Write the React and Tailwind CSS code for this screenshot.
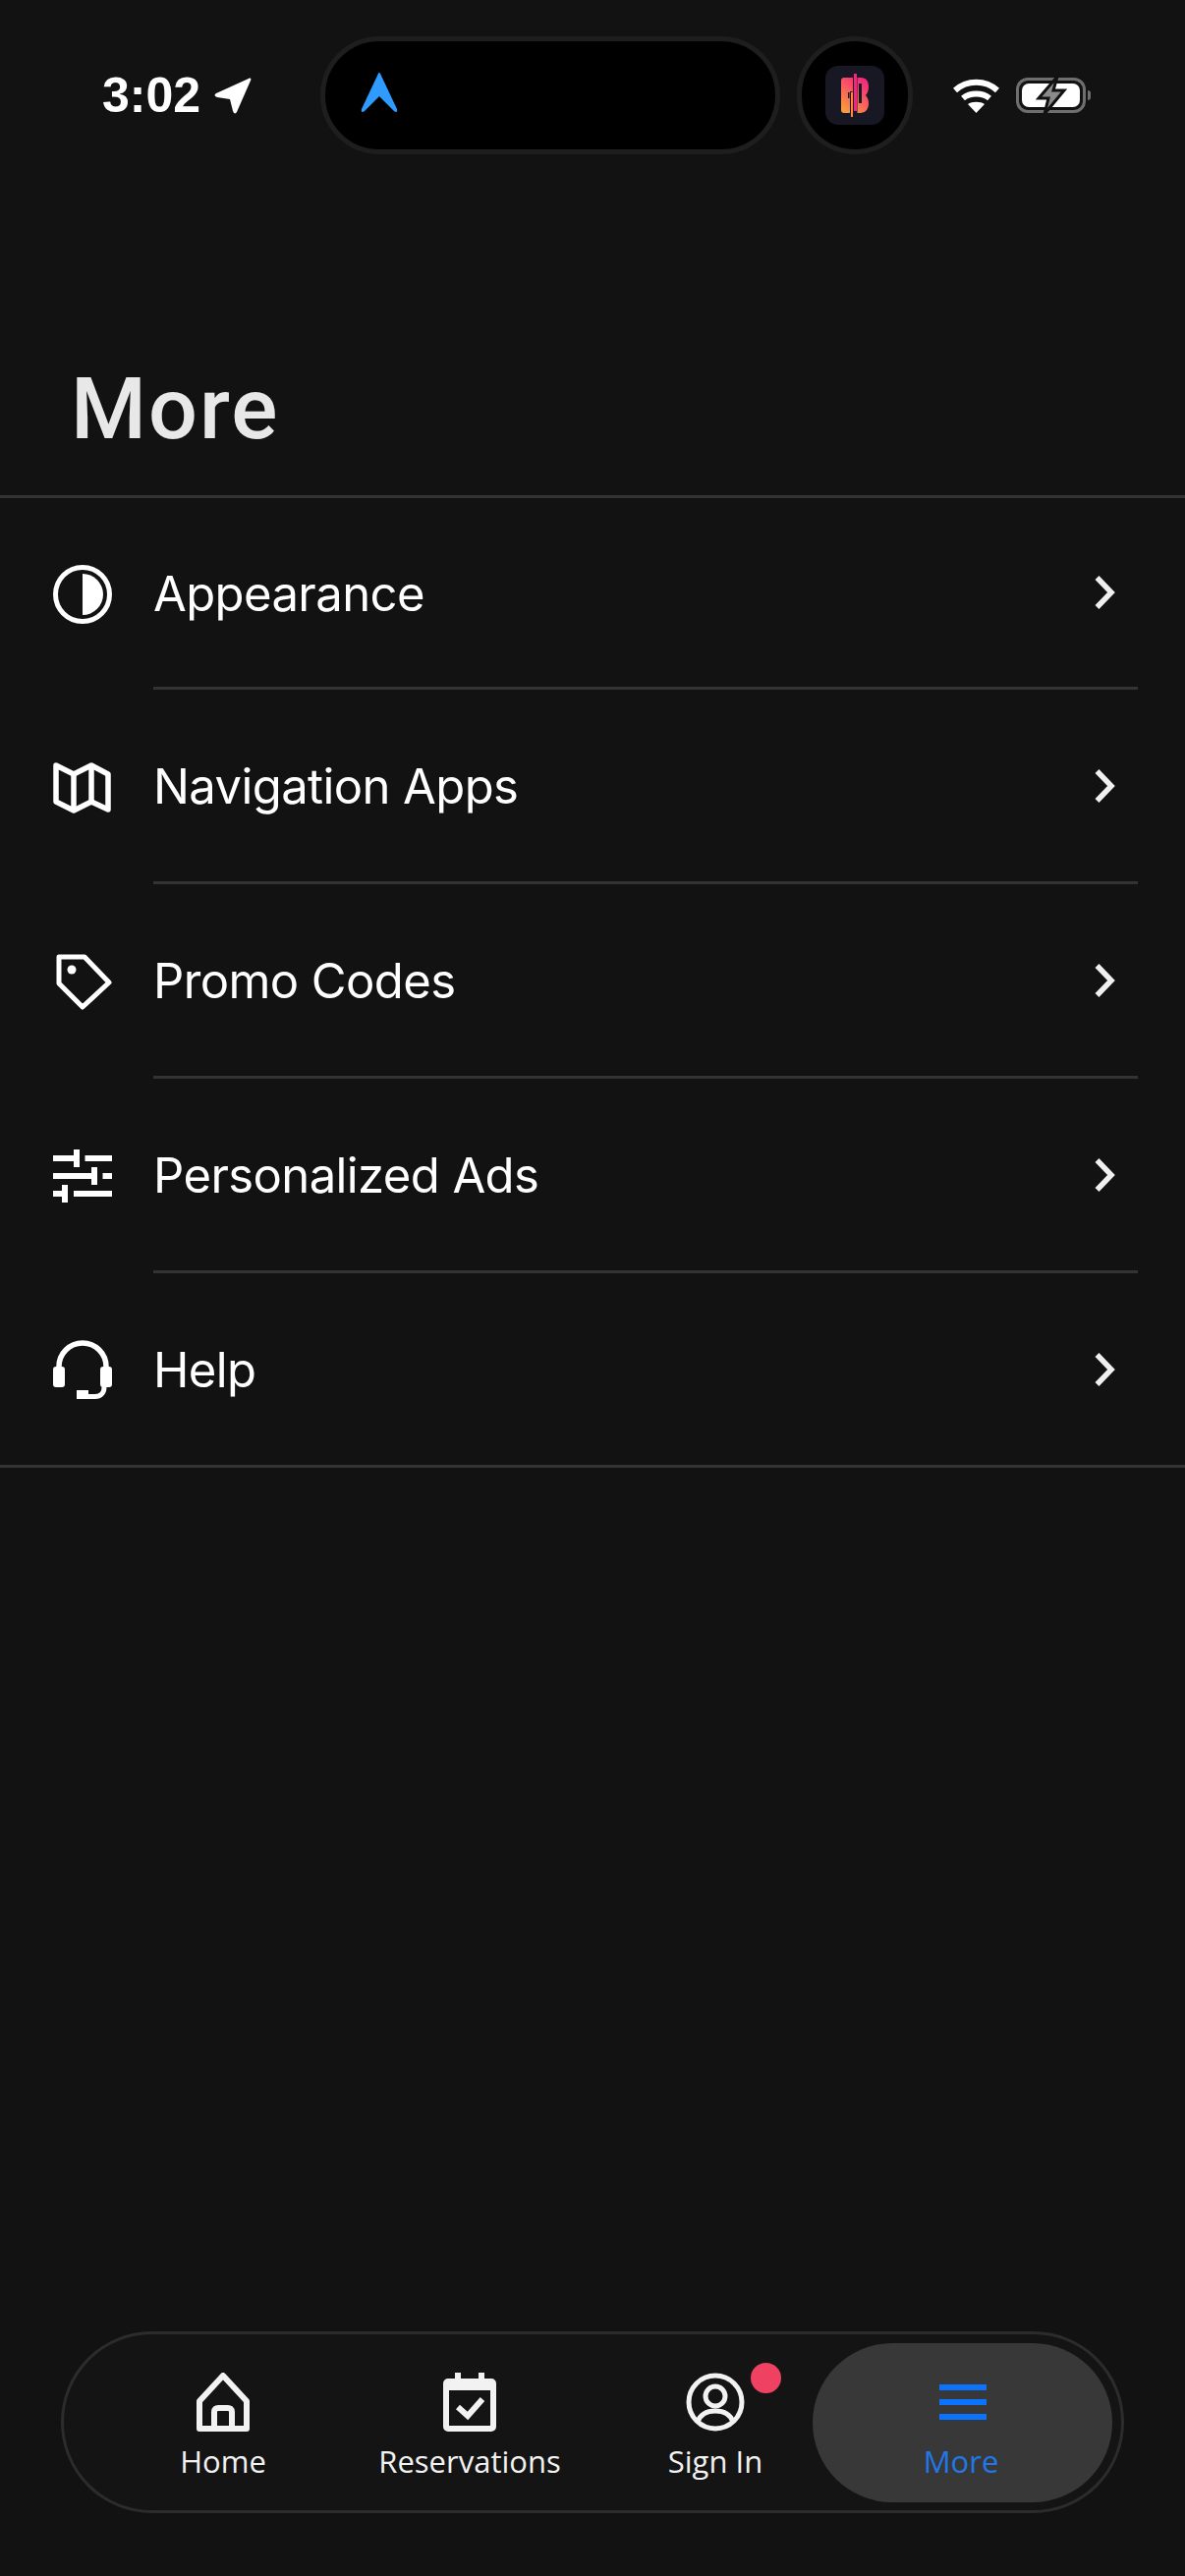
const rows = [
  {
    label: "Appearance",
    icon: (
      <svg width="60" height="60" viewBox="0 0 60 60" fill="none">
        <circle cx="30" cy="30" r="27.500" stroke="#fff" strokeWidth="5" />
        <path d="M30 9a21 21 0 0 1 0 42Z" fill="#fff" />
      </svg>
    ),
  },
  {
    label: "Navigation Apps",
    icon: (
      <svg width="59" height="53" viewBox="0 0 59 53" fill="none" stroke="#fff" strokeWidth="5.500" strokeLinejoin="round">
        <path d="M3 4 21 13 39 4 56 13V49L39 41 21 50 3 41Z" />
        <path d="M21 13V50M39 4V41" />
      </svg>
    ),
  },
  {
    label: "Promo Codes",
    icon: (
      <svg width="60" height="57" viewBox="0 0 60 57" fill="none">
        <path d="M6 3H32L57 29 30 54 6 30Z" stroke="#fff" strokeWidth="5" strokeLinejoin="round" />
        <circle cx="19" cy="16" r="4.500" fill="#fff" />
      </svg>
    ),
  },
  {
    label: "Personalized Ads",
    icon: (
      <svg width="60" height="54" viewBox="0 0 60 54" fill="#fff">
        <path d="M0 6h21V0h6v18h-6v-6H0ZM32.500 6H60v6H32.500ZM0 24h39v-6h6v18h-6v-6H0ZM50.500 24H60v6H50.500ZM0 42h9v-6h6v18H9v-6H0ZM21 42H60v6H21Z" />
      </svg>
    ),
  },
  {
    label: "Help",
    icon: (
      <svg width="60" height="60" viewBox="0 0 60 60" fill="none">
        <path d="M6 30V27a24 24 0 0 1 48 0v3" stroke="#fff" strokeWidth="5.500" />
        <rect y="27" width="12" height="21" rx="3" fill="#fff" />
        <rect x="48" y="27" width="12" height="21" rx="3" fill="#fff" />
        <path d="M52 46v2c0 6-4 9.500-9 9.500H34" stroke="#fff" strokeWidth="5" />
        <rect x="24" y="51" width="12" height="9" fill="#fff" />
      </svg>
    ),
  },
];

function StatusBar() {
  return (
    <div className="mt-[37px] h-[120px] flex items-center shrink-0">
      <div className="w-[326px] pl-[104px] flex items-center gap-[14px]">
        <span className="text-[50px] leading-[60px] font-bold text-white" style={{ fontFamily: '"Liberation Sans", sans-serif' }}>
          3:02
        </span>
        <svg width="38" height="37" viewBox="0 0 38 37" fill="#fff">
          <path d="M35 1c2-1 3 0 2 2L23 35c-1 2-3 2-4-1l-3-12-13-2c-3-1-3-3-1-4Z" />
        </svg>
      </div>
      <div className="w-[468px] h-[120px] rounded-[60px] bg-black border-[5px] border-[#1e1e1e] flex items-center pl-[36px]">
        <svg className="-mt-[5px]" width="38" height="41" viewBox="0 0 38 41" fill="#2f9bff">
          <path d="M19 0c1 0 1 1 2 3l16 34c1 3-1 4-3 2L19 24 4 39c-2 2-4 1-3-2L17 3c1-2 1-3 2-3Z" />
        </svg>
      </div>
      <div className="ml-[17px] w-[118px] h-[120px] rounded-full bg-black border-[5px] border-[#1e1e1e] flex items-center justify-center">
        <svg width="60" height="60" viewBox="0 0 60 60">
          <defs>
            <linearGradient id="logo" x1="0.8" y1="0" x2="0.2" y2="1">
              <stop offset="0" stopColor="#f5247f" />
              <stop offset="1" stopColor="#fb9a3c" />
            </linearGradient>
          </defs>
          <rect width="60" height="60" rx="13" fill="#181824" />
          <path d="M19 12h17c6 0 8 4 8 9 0 4-1 7-3 9 2 2 3 5 3 8 0 6-3 10-9 10H19c-2 0-3-1-3-3V15c0-2 1-3 3-3Z" fill="url(#logo)" />
          <path d="M23 27h1.500v6H23ZM25 26h2.500v27H25ZM28 7h4.500v41H28ZM34 18h3v20h-3Z" fill="#181824" />
          <path d="M26 27h2v25h-2Z" fill="#fb8a45" />
          <path d="M29 8h3v38h-3Z" fill="#f5247f" />
        </svg>
      </div>
      <div className="ml-[41px] flex items-center gap-[17px]">
        <svg width="47" height="35" viewBox="0 0 47 35" fill="none" stroke="#fff" strokeWidth="6">
          <path d="M2 12c12-11 31-11 43 0M10 20c7-6 20-6 27 0" />
          <path d="M15 26c4-3 13-3 17 0l-8.500 9Z" fill="#fff" stroke="none" />
        </svg>
        <div className="relative flex items-center">
          <div className="w-[71px] h-[36px] rounded-[12px] border-[3px] border-[#6f6f6f] p-[3px]">
            <div className="h-full w-full rounded-[7px] bg-white" />
          </div>
          <div className="w-[3px] h-[10px] bg-[#6f6f6f] rounded-r-sm ml-[2px]" />
          <svg className="absolute left-[20px] -top-[1px]" width="32" height="38" viewBox="0 0 32 38" fill="#8a8a8a" stroke="#121212" strokeWidth="3">
            <path d="M22 0 3 22h10l-4 16 20-24H18Z" />
          </svg>
        </div>
      </div>
    </div>
  );
}

function MenuRow({ row, first, last }) {
  return (
    <div className={`flex items-stretch ${first || last ? "h-[195px]" : "h-[198px]"}`}>
      <div className="w-[156px] pl-[54px] flex items-center shrink-0">{row.icon}</div>
      <div className={`flex-1 flex items-center justify-between mr-[48px] ${last ? "" : "border-b-[3px] border-[#333333]"}`}>
        <span className="text-[49px] mt-[3px] font-normal tracking-[-0.6px] text-white">{row.label}</span>
        <svg className="mr-[23px]" width="21" height="34" viewBox="0 0 21 34" fill="none" stroke="#f0f0f0" strokeWidth="5.500">
          <path d="M2.500 2 17 17 2.500 32" />
        </svg>
      </div>
    </div>
  );
}

function TabItem({ icon, label, className }) {
  return (
    <div className={`flex flex-col items-center mt-[39px] ${className}`}>
      {icon}
      <span className="text-[31px] leading-[40px] mt-[10px] text-[#f2f2f2] whitespace-nowrap" style={{ fontFamily: '"Open Sans", sans-serif' }}>
        {label}
      </span>
    </div>
  );
}

function TabBar() {
  return (
    <div className="mx-[62px] h-[185px] rounded-[93px] border-[3px] border-[#2c2c2c] bg-[#141414] flex items-start pr-[9px]">
      <TabItem
        className="w-[120px] ml-[102px]"
        label="Home"
        icon={
          <svg width="54" height="60" viewBox="0 0 54 60" fill="none" stroke="#f2f2f2" strokeWidth="6" strokeLinejoin="round">
            <path d="M27 3 3 29v28h48V29Z" />
            <path d="M18 57V40c0-3 2-4 4-4h10c2 0 4 1 4 4v17" />
          </svg>
        }
      />
      <TabItem
        className="w-[200px] ml-[91px]"
        label="Reservations"
        icon={
          <svg width="54" height="60" viewBox="0 0 54 60" fill="none">
            <path d="M12 0h6v8h-6ZM36 0h6v8h-6Z" fill="#f2f2f2" />
            <rect x="3" y="9" width="48" height="48" rx="2" stroke="#f2f2f2" strokeWidth="6" />
            <path d="M3 8h48v10H3Z" fill="#f2f2f2" />
            <path d="M15 35l10 9 15-17" stroke="#f2f2f2" strokeWidth="6" />
          </svg>
        }
      />
      <TabItem
        className="relative w-[120px] ml-[90px]"
        label="Sign In"
        icon={
          <>
            <svg width="60" height="60" viewBox="0 0 60 60" fill="none" stroke="#f2f2f2" strokeWidth="5">
              <circle cx="30" cy="30" r="27" />
              <circle cx="30" cy="24" r="10" />
              <path d="M12 50c3-8 10-11 18-11s15 3 18 11" />
            </svg>
            <div className="absolute w-[31px] h-[31px] rounded-full bg-[#ef4161] left-[96px] -top-[10px]" />
          </>
        }
      />
      <div className="ml-auto self-center w-[305px] h-[162px] rounded-[81px] bg-[#383838] flex flex-col items-center pt-[42px]">
        <div className="flex flex-col gap-[9px]">
          <div className="w-[48px] h-[6px] bg-[#0a74ff]" />
          <div className="w-[48px] h-[6px] bg-[#0a74ff]" />
          <div className="w-[48px] h-[6px] bg-[#0a74ff]" />
        </div>
        <span className="text-[31px] leading-[40px] mt-[22px] -ml-[3px] text-[#2277e6]" style={{ fontFamily: '"Open Sans", sans-serif' }}>
          More
        </span>
      </div>
    </div>
  );
}

export default function App() {
  return (
    <div className="w-[1206px] h-[2622px] bg-[#121212] flex flex-col overflow-hidden" style={{ fontFamily: "Inter, sans-serif" }}>
      <StatusBar />
      <h1 className="pl-[72px] mt-[209px] text-[88px] leading-[100px] font-medium tracking-[2px] text-[#e8e8e8] h-[138px] shrink-0" style={{ fontFamily: "Roboto, sans-serif" }}>
        More
      </h1>
      <div className="border-y-[3px] border-[#333333]">
        {rows.map((row, i) => (
          <MenuRow key={row.label} row={row} first={i === 0} last={i === rows.length - 1} />
        ))}
      </div>
      <div className="mt-auto mb-[64px]">
        <TabBar />
      </div>
    </div>
  );
}
